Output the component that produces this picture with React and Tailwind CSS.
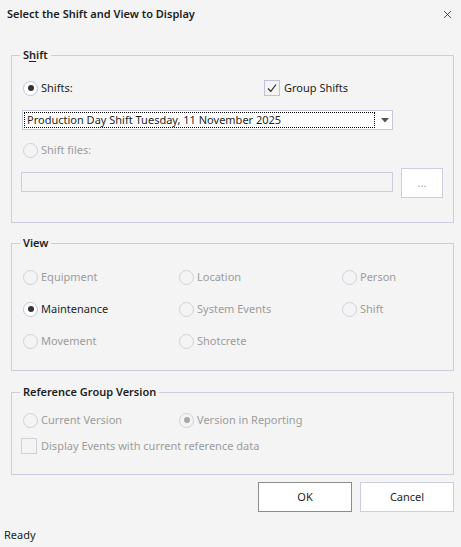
import { X } from 'lucide-react'

const FONT = { fontFamily: '"Noto Sans", "Open Sans", sans-serif' }

function Radio({ label, checked, disabled }) {
  return (
    <div className="flex items-center h-[16px]">
      <span
        className={`w-[15px] h-[15px] rounded-full border flex items-center justify-center shrink-0 ${
          disabled ? 'border-[#d0d0dc] bg-[#f4f4f4]' : 'border-[#c4c4d6] bg-white'
        }`}
      >
        {checked && (
          <span className={`w-[6px] h-[6px] rounded-full ${disabled ? 'bg-[#a8a8a8]' : 'bg-[#333333]'}`} />
        )}
      </span>
      <span className={`ml-[3px] text-[11px] leading-[16px] ${disabled ? 'text-[#9c9c9c]' : 'text-[#1e1e1e]'}`}>
        {label}
      </span>
    </div>
  )
}

function Check({ label, checked, disabled }) {
  return (
    <div className="flex items-center h-[16px]">
      <span
        className={`w-[16px] h-[16px] border flex items-center justify-center shrink-0 ${
          disabled ? 'border-[#d0d0dc]' : 'border-[#c0c0d6]'
        }`}
      >
        {checked && (
          <svg width="12" height="12" viewBox="0 0 12 12" fill="none">
            <path d="M2 6.5 L4.8 9.3 L10 2.5" stroke="#222" strokeWidth="1.1" />
          </svg>
        )}
      </span>
      <span className={`ml-[4px] text-[11px] leading-[16px] ${disabled ? 'text-[#9c9c9c]' : 'text-[#1e1e1e]'}`}>
        {label}
      </span>
    </div>
  )
}

function Group({ legend, className, children }) {
  return (
    <fieldset className={`ml-[11px] w-[443px] border border-[#cdcde0] pl-[8px] pr-[10px] ${className}`}>
      <legend className="px-[3px] text-[11px] leading-[16px] font-semibold text-[#1e1e1e]">{legend}</legend>
      {children}
    </fieldset>
  )
}

export default function App() {
  return (
    <div className="w-[461px] h-[547px] bg-[#f4f4f4] flex flex-col text-[#1e1e1e] overflow-hidden" style={FONT}>
      <div className="h-[29px] flex items-center justify-between pl-[7px] pr-[7px]">
        <span className="text-[11px] font-semibold">Select the Shift and View to Display</span>
        <X size={13} strokeWidth={1.5} className="text-[#222]" />
      </div>

      <Group
        legend={
          <>
            S<span className="underline underline-offset-2">h</span>ift
          </>
        }
        className="mt-[18px] pb-[24px]"
      >
        <div className="flex items-center mt-[17px] ml-[3px]">
          <div className="w-[241px]">
            <Radio label="Shifts:" checked />
          </div>
          <Check label="Group Shifts" checked />
        </div>

        <div className="mt-[14px] ml-[2px] w-[371px] h-[20px] border border-[#c6c6dc] bg-white flex items-center">
          <div className="ml-[1px] w-[351px] h-[16px] border border-dotted border-black flex items-center">
            <span className="pl-[2px] text-[11px] leading-[14px] whitespace-nowrap">
              Production Day Shift Tuesday, 11 November 2025
            </span>
          </div>
          <svg width="8" height="5" viewBox="0 0 8 5" className="ml-[6px]">
            <path d="M0 0 H8 L4 4.5 Z" fill="#555" />
          </svg>
        </div>

        <div className="mt-[12px] ml-[3px]">
          <Radio label="Shift files:" disabled />
        </div>

        <div className="mt-[10px] ml-[1px] flex items-start">
          <div className="mt-[4px] w-[372px] h-[20px] border border-[#cdcde0]" />
          <div className="ml-[8px] w-[42px] h-[30px] border border-[#cdcde0] bg-white flex items-center justify-center text-[11px] text-[#a49cc4]">
            ...
          </div>
        </div>
      </Group>

      <Group legend="View" className="mt-[12px] pb-[21px]">
        <div className="mt-[18px] ml-[3px] grid grid-cols-[156px_163px_1fr] gap-y-[16px]">
          <Radio label="Equipment" disabled />
          <Radio label="Location" disabled />
          <Radio label="Person" disabled />
          <Radio label="Maintenance" checked />
          <Radio label="System Events" disabled />
          <Radio label="Shift" disabled />
          <Radio label="Movement" disabled />
          <Radio label="Shotcrete" disabled />
        </div>
      </Group>

      <Group legend="Reference Group Version" className="mt-[13px] pb-[20px]">
        <div className="mt-[12px] ml-[3px] flex">
          <div className="w-[156px]">
            <Radio label="Current Version" disabled />
          </div>
          <Radio label="Version in Reporting" checked disabled />
        </div>
        <div className="mt-[10px] ml-[1px]">
          <Check label="Display Events with current reference data" disabled />
        </div>
      </Group>

      <div className="mt-[7px] flex justify-end gap-[8px] pr-[7px]">
        <button className="w-[94px] h-[30px] border border-[#8c8c8c] bg-white text-[11px]">OK</button>
        <button className="w-[94px] h-[30px] border border-[#cdcde0] bg-white text-[11px]">Cancel</button>
      </div>

      <div className="mt-[15px] pl-[4px] text-[11px] leading-[16px]">Ready</div>
    </div>
  )
}
